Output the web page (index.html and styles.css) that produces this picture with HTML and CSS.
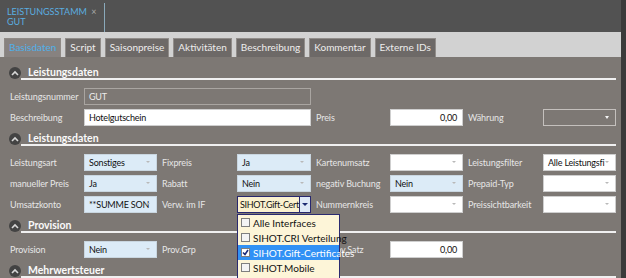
FILE: index.html
```html
<!DOCTYPE html>
<html lang="de">

<head>
    <meta charset="UTF-8">
    <meta name="viewport" content="width=device-width, initial-scale=1.0">
    <link rel="stylesheet" href="styles.css">
    <title>Leistungsstamm</title>
</head>

<body>
    <div class="window">
        <div class="main">
            <header class="doc-bar">
                <div class="doc-tab">
                    <div class="doc-title">LEISTUNGSSTAMM <span class="close">&times;</span></div>
                    <div class="doc-sub">GUT</div>
                </div>
            </header>

            <nav class="tabs">
                <span class="tab active">Basisdaten</span>
                <span class="tab">Script</span>
                <span class="tab">Saisonpreise</span>
                <span class="tab">Aktivitäten</span>
                <span class="tab">Beschreibung</span>
                <span class="tab">Kommentar</span>
                <span class="tab">Externe IDs</span>
            </nav>

            <div class="content">
                <section class="group">
                    <div class="group-head">
                        <span class="toggle"><svg width="8" height="6" viewBox="0 0 8 6"><path d="M1 5 L4 2 L7 5" fill="none" stroke="#d8d8d8" stroke-width="1.6"/></svg></span>
                        <span class="group-title">Leistungsdaten</span>
                    </div>
                    <div class="form-grid">
                        <label class="lbl first">Leistungsnummer</label>
                        <div class="field disabled wide">GUT</div>

                        <label class="lbl first">Beschreibung</label>
                        <div class="field wide">Hotelgutschein</div>
                        <label class="lbl">Preis</label>
                        <div class="field num">0,00</div>
                        <label class="lbl">Währung</label>
                        <div class="field dark select"></div>
                    </div>
                </section>

                <section class="group">
                    <div class="group-head">
                        <span class="toggle"><svg width="8" height="6" viewBox="0 0 8 6"><path d="M1 5 L4 2 L7 5" fill="none" stroke="#d8d8d8" stroke-width="1.6"/></svg></span>
                        <span class="group-title">Leistungsdaten</span>
                    </div>
                    <div class="form-grid">
                        <label class="lbl">Leistungsart</label>
                        <div class="field blue select">Sonstiges</div>
                        <label class="lbl">Fixpreis</label>
                        <div class="field blue select">Ja</div>
                        <label class="lbl">Kartenumsatz</label>
                        <div class="field select"></div>
                        <label class="lbl">Leistungsfilter</label>
                        <div class="field select">Alle Leistungsfi</div>

                        <label class="lbl">manueller Preis</label>
                        <div class="field blue select">Ja</div>
                        <label class="lbl">Rabatt</label>
                        <div class="field blue select">Nein</div>
                        <label class="lbl">negativ Buchung</label>
                        <div class="field blue select">Nein</div>
                        <label class="lbl">Prepaid-Typ</label>
                        <div class="field select"></div>

                        <label class="lbl">Umsatzkonto</label>
                        <div class="field blue select">**SUMME SON</div>
                        <label class="lbl">Verw. im IF</label>
                        <div class="combo-wrap">
                            <div class="combo">
                                <span class="combo-text">SIHOT.Gift-Cert</span>
                                <span class="combo-btn"></span>
                            </div>
                            <ul class="popup">
                                <li><span class="check"></span>Alle Interfaces</li>
                                <li><span class="check"></span>SIHOT.CRI Verteilung</li>
                                <li class="hot"><span class="check on"><svg width="7" height="7" viewBox="0 0 7 7"><path d="M1 3.5 L3 5.5 L6 1" fill="none" stroke="#1b2b7a" stroke-width="1.6"/></svg></span>SIHOT.Gift-Certificates</li>
                                <li><span class="check"></span>SIHOT.Mobile</li>
                                <li><span class="check"></span>SIHOT.Web</li>
                            </ul>
                        </div>
                        <label class="lbl">Nummernkreis</label>
                        <div class="field select"></div>
                        <label class="lbl">Preissichtbarkeit</label>
                        <div class="field select"></div>
                    </div>
                </section>

                <section class="group">
                    <div class="group-head">
                        <span class="toggle"><svg width="8" height="6" viewBox="0 0 8 6"><path d="M1 5 L4 2 L7 5" fill="none" stroke="#d8d8d8" stroke-width="1.6"/></svg></span>
                        <span class="group-title">Provision</span>
                    </div>
                    <div class="form-grid">
                        <label class="lbl">Provision</label>
                        <div class="field blue select">Nein</div>
                        <label class="lbl">Prov.Grp</label>
                        <div class="field blue select"></div>
                        <label class="lbl indent">Prov.Satz</label>
                        <div class="field num">0,00</div>
                    </div>
                </section>

                <section class="group">
                    <div class="group-head">
                        <span class="toggle"><svg width="8" height="6" viewBox="0 0 8 6"><path d="M1 5 L4 2 L7 5" fill="none" stroke="#d8d8d8" stroke-width="1.6"/></svg></span>
                        <span class="group-title">Mehrwertsteuer</span>
                    </div>
                </section>
            </div>
        </div>
        <div class="scroll"></div>
    </div>
</body>

</html>
```

FILE: styles.css
```css
* {
    margin: 0;
    padding: 0;
    box-sizing: border-box;
}

body {
    width: 626px;
    height: 278px;
    overflow: hidden;
    background-color: #7d7874;
    font-family: Lato, sans-serif;
    font-size: 9px;
}

.window {
    display: flex;
    height: 278px;
}

.main {
    flex: 1;
    display: flex;
    flex-direction: column;
}

.scroll {
    width: 5px;
    background-color: #3a3a3a;
}

/*-------- document bar --------*/

.doc-bar {
    height: 33px;
    background-color: #525252;
    display: flex;
    align-items: flex-end;
}

.doc-tab {
    width: 105px;
    height: 29px;
    padding: 4px 0 0 7px;
    border-right: 1px solid #8aa9ba;
    color: #5aaee0;
    font-size: 9px;
    line-height: 10px;
}

.close {
    color: #a9a9a9;
    margin-left: 2px;
}

/*-------- tabs --------*/

.tabs {
    height: 25px;
    background-color: #d2d2d2;
    display: flex;
    align-items: flex-end;
    gap: 4px;
    padding-left: 4px;
}

.tab {
    height: 19px;
    padding: 0 4px;
    line-height: 17px;
    background-color: #6d6967;
    border: 1px solid #918d8a;
    border-bottom: none;
    color: #ededed;
    font-size: 10px;
}

.tab.active {
    padding: 0 4px;
    background-color: #878280;
    border-color: #8f8a86;
    color: #4fb0ea;
}

/*-------- content --------*/

.content {
    flex: 1;
    padding: 3px 5px 0 5px;
}

.group {
    margin-top: 6px;
}

.group-head {
    display: flex;
    align-items: flex-end;
    margin-left: 4px;
}

.toggle {
    width: 12px;
    height: 12px;
    border-radius: 50%;
    background-color: #434343;
    display: flex;
    align-items: center;
    justify-content: center;
    margin-bottom: 1px;
}

.group-title {
    flex: 1;
    padding-left: 7px;
    border-bottom: 2px solid #f0f0f0;
    color: #fafafa;
    font-weight: 700;
    font-size: 10.5px;
    line-height: 12px;
}

.form-grid {
    display: grid;
    grid-template-columns: 79px 73px 80px 74px 79px 73px 80px 73px;
    grid-auto-rows: 17px;
    row-gap: 4px;
    margin-top: 8px;
}

.lbl {
    padding-left: 5px;
    line-height: 17px;
    color: #e6e6e6;
    letter-spacing: -0.1px;
    white-space: nowrap;
    overflow: hidden;
}

.lbl.first {
    grid-column: 1;
}

.lbl.indent {
    padding-left: 17px;
}

.field {
    position: relative;
    border: 1px solid #cfcfcf;
    background-color: #fff;
    padding: 0 4px;
    line-height: 15px;
    color: #111;
    letter-spacing: -0.2px;
    white-space: nowrap;
    overflow: hidden;
}

.field.wide {
    grid-column: span 3;
}

.field.num {
    text-align: right;
    padding-right: 5px;
}

.field.blue {
    background-color: #dcebf7;
    border-color: #c9d6e0;
}

.field.disabled {
    background-color: transparent;
    border-color: #a9a5a1;
    color: #ececec;
}

.field.dark {
    background-color: transparent;
    border-color: #c4c0bd;
}

.field.select::after {
    content: "";
    position: absolute;
    right: 6px;
    top: 6px;
    border-left: 2px solid transparent;
    border-right: 2px solid transparent;
    border-top: 2px solid #b9b9b9;
}

.field.dark.select::after {
    border-top-color: #f4f4f4;
    border-left-width: 2.5px;
    border-right-width: 2.5px;
    border-top-width: 3px;
}

/*-------- combo with popup --------*/

.combo-wrap {
    position: relative;
}

.combo {
    height: 17px;
    display: flex;
    border: 1px solid #27276e;
    background-color: #fbf1cf;
}

.combo-text {
    flex: 1;
    padding-left: 2px;
    line-height: 15px;
    color: #111;
    font-size: 9px;
    letter-spacing: -0.3px;
    white-space: nowrap;
    overflow: hidden;
}

.combo-btn {
    width: 11px;
    border-left: 1px solid #27276e;
    background-color: #dfe9f7;
    position: relative;
}

.combo-btn::after {
    content: "";
    position: absolute;
    left: 2px;
    top: 6px;
    border-left: 3px solid transparent;
    border-right: 3px solid transparent;
    border-top: 3px solid #1d2a72;
}

.popup {
    position: absolute;
    z-index: 2;
    top: calc(100% + 1px);
    left: 0;
    width: 103px;
    list-style-type: none;
    background-color: #fdf5d8;
    border: 1px solid #2a2a70;
    border-bottom: none;
}

.popup li {
    height: 15px;
    display: flex;
    align-items: center;
    gap: 3px;
    padding-left: 3px;
    color: #111;
    font-size: 10px;
    white-space: nowrap;
}

.popup li.hot {
    background-color: #3191f5;
    color: #fff;
}

.check {
    width: 9px;
    height: 9px;
    flex-shrink: 0;
    border: 1px solid #7f7f7f;
    background-color: #f4f4f4;
    display: flex;
    align-items: center;
    justify-content: center;
}

.check.on {
    background-color: #fff;
}
```
